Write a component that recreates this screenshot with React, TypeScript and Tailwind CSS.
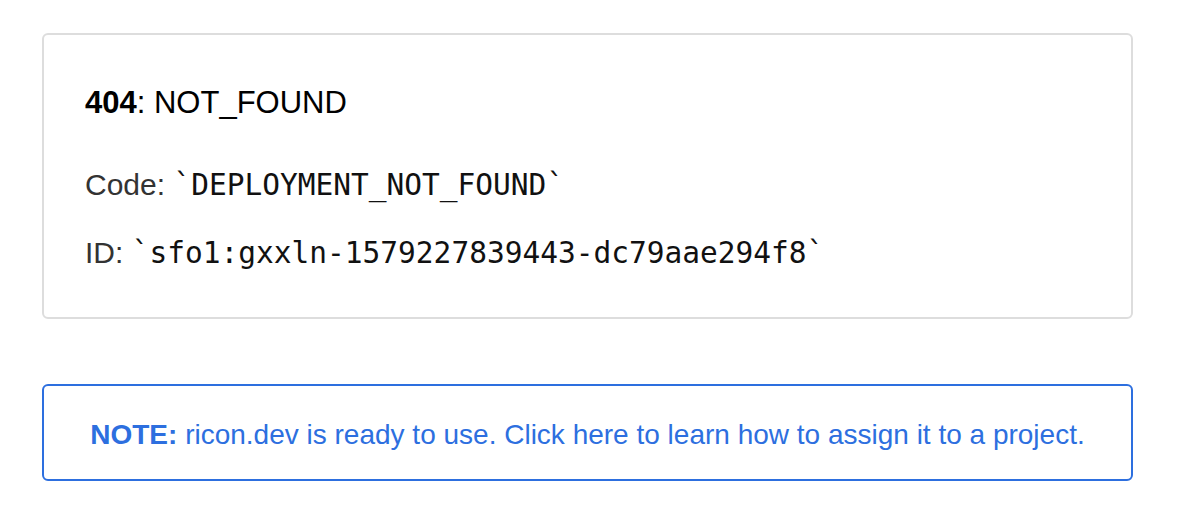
export default function App() {
  return (
    <div className="min-h-screen w-[1182px] bg-white pt-[33px] font-['Liberation_Sans',Arial,sans-serif]">
      {/* error box */}
      <div className="ml-[42px] w-[1091px] rounded-[6px] border-2 border-[#dddddd] pl-[41px] pr-[41px] pt-[51px] pb-[47px] text-[30px] leading-[34px]">
        <h1 className="text-[31px] text-black">
          <span className="font-bold">404</span>: NOT_FOUND
        </h1>
        <p className="mt-[48px] text-[#333333]">
          Code:{' '}
          <code className="font-['DejaVu_Sans_Mono',monospace] text-[29.5px] text-[#111111]">`DEPLOYMENT_NOT_FOUND`</code>
        </p>
        <p className="mt-[34px] text-[#333333]">
          ID:{' '}
          <code className="font-['DejaVu_Sans_Mono',monospace] text-[29.5px] text-[#111111]">
            `sfo1:gxxln-1579227839443-dc79aae294f8`
          </code>
        </p>
      </div>

      {/* note */}
      <a
        href="#"
        className="mt-[65px] ml-[42px] block w-[1091px] rounded-[6px] border-2 border-[#2d6fdf] pt-[33px] pb-[28px] text-center text-[28px] leading-[32px] text-[#2d6fdf]"
      >
        <span className="font-bold">NOTE:</span> ricon.dev is ready to use. Click here to learn how to assign it to a project.
      </a>
    </div>
  )
}
